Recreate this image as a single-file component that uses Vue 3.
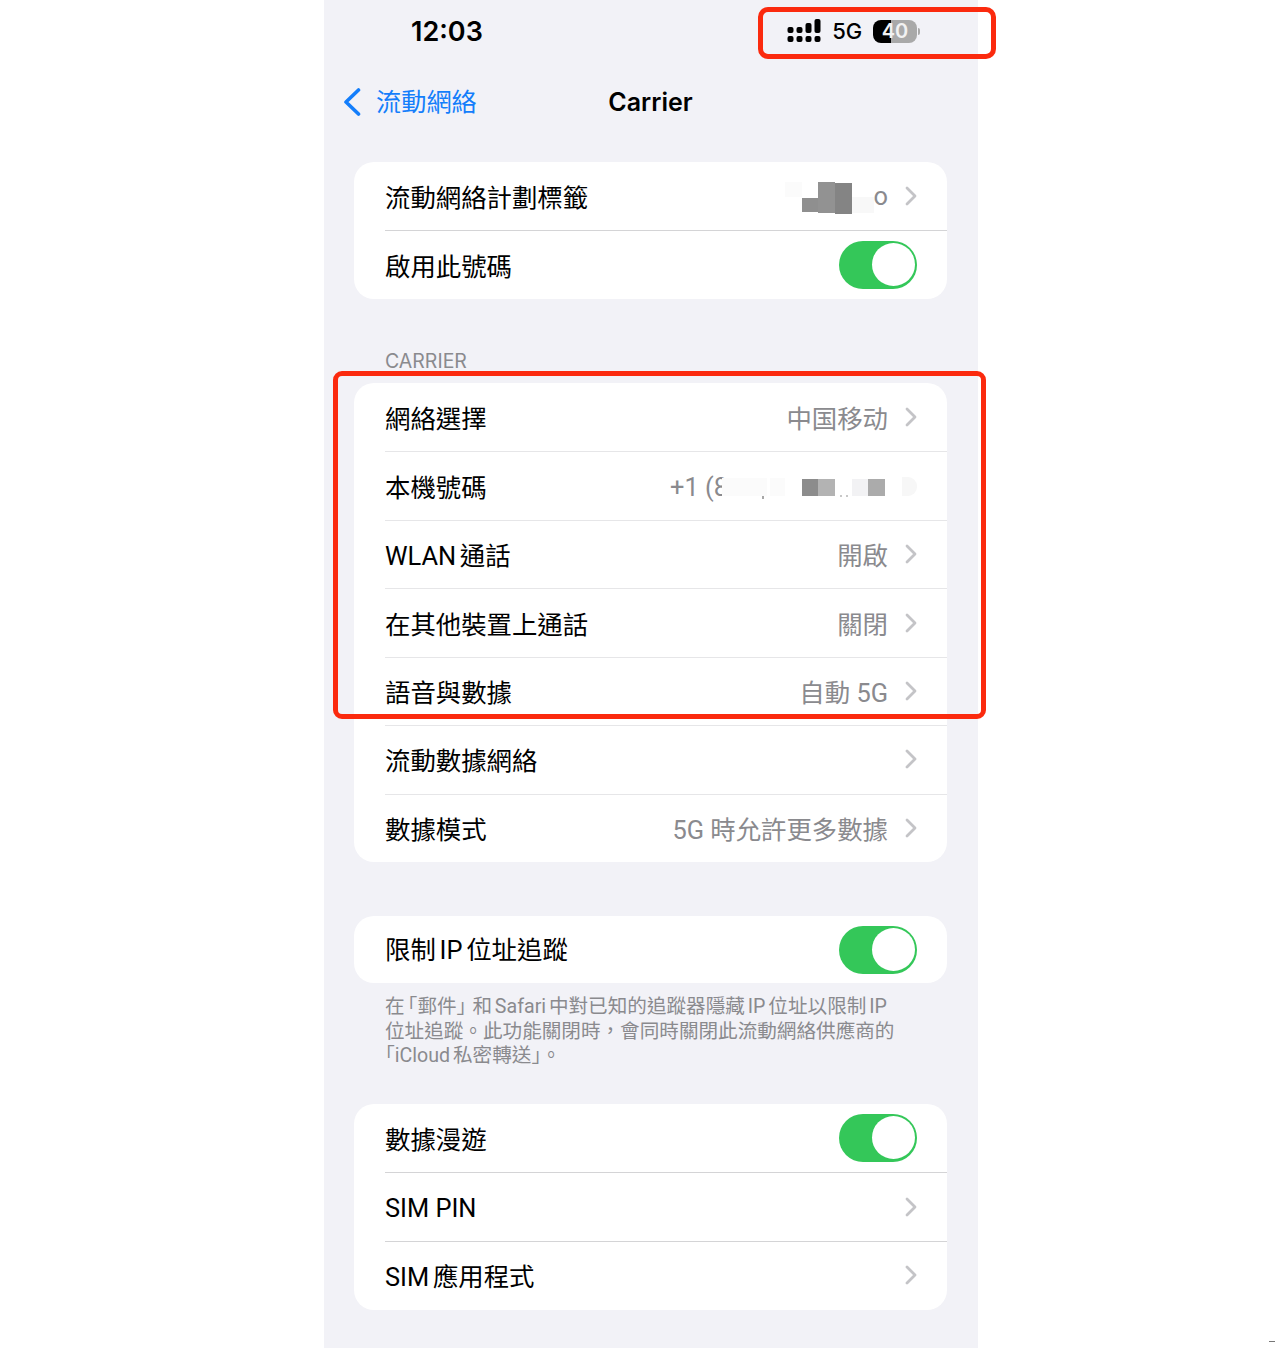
<script setup>
const planRows = [
  { label: '流動網絡計劃標籤', value: 'o', chevron: true, patches: 'plan' },
  { label: '啟用此號碼', toggle: true },
]
const carrierRows = [
  { label: '網絡選擇', value: '中国移动', chevron: true },
  { label: '本機號碼', value: '+1 (8', patches: 'phone' },
  { label: 'WLAN 通話', value: '開啟', chevron: true },
  { label: '在其他裝置上通話', value: '關閉', chevron: true },
  { label: '語音與數據', value: '自動 5G', chevron: true },
  { label: '流動數據網絡', chevron: true },
  { label: '數據模式', value: '5G 時允許更多數據', chevron: true },
]
const limitRows = [{ label: '限制 IP 位址追蹤', toggle: true }]
const simRows = [
  { label: '數據漫遊', toggle: true },
  { label: 'SIM PIN', chevron: true },
  { label: 'SIM 應用程式', chevron: true },
]
const groups = [
  { id: 'plan', rows: planRows },
  { id: 'carrier', title: 'CARRIER', rows: carrierRows },
  { id: 'limit', rows: limitRows, note: true },
  { id: 'sim', rows: simRows },
]
</script>

<template>
  <main class="phone">
    <header class="status">
      <span class="time">12:03</span>
      <div class="indicators">
        <svg class="signal" width="34" height="24" viewBox="0 0 34 24" fill="#000">
          <rect x="0.5" y="17" width="6" height="6" rx="2" />
          <rect x="9.5" y="17" width="6" height="6" rx="2" />
          <rect x="18.5" y="17" width="6" height="6" rx="2" />
          <rect x="27.5" y="17" width="6" height="6" rx="2" />
          <rect x="0.5" y="8" width="6" height="6" rx="2" />
          <rect x="9.5" y="8" width="6" height="6" rx="2" />
          <rect x="18.5" y="4" width="6" height="10" rx="2" />
          <rect x="27.5" y="0" width="6" height="14" rx="2" />
        </svg>
        <span class="net">5G</span>
        <div class="battery"><span>40</span></div>
        <i class="nub"></i>
      </div>
    </header>

    <nav class="nav">
      <a class="back">
        <svg width="18" height="28" viewBox="0 0 18 28" fill="none">
          <path d="M15.5 2 3 14l12.5 12" stroke="#147efb" stroke-width="3.6" stroke-linecap="round" stroke-linejoin="round" />
        </svg>
        <span>流動網絡</span>
      </a>
      <h1>Carrier</h1>
    </nav>

    <section v-for="group in groups" :key="group.id" class="group" :class="'group-' + group.id">
      <h2 v-if="group.title">{{ group.title }}</h2>
      <div class="card">
        <div v-for="row in group.rows" :key="row.label" class="row">
          <span class="label">{{ row.label }}</span>
          <div class="right">
            <span v-if="row.value" class="value" :class="{ 'value-phone': row.patches === 'phone' }">{{ row.value }}</span>
            <svg v-if="row.chevron" class="chevron" width="12" height="20" viewBox="0 0 12 20" fill="none">
              <path d="M2 2l8 8-8 8" stroke="#c4c4c7" stroke-width="2.8" stroke-linecap="round" stroke-linejoin="round" />
            </svg>
            <span v-if="row.toggle" class="toggle"><i></i></span>
          </div>
          <template v-if="row.patches === 'plan'">
            <i class="patch" style="left: 431px; top: 20px; width: 17px; height: 15px; background: #fbfbfb"></i>
            <i class="patch" style="left: 448px; top: 36px; width: 16px; height: 14px; background: #8f8f8f"></i>
            <i class="patch" style="left: 464px; top: 20px; width: 17px; height: 31px; background: #929292"></i>
            <i class="patch" style="left: 481px; top: 21px; width: 17px; height: 31px; background: #848484"></i>
            <i class="patch" style="left: 498px; top: 35px; width: 22px; height: 16px; background: #f8f8f8"></i>
          </template>
          <template v-if="row.patches === 'phone'">
            <i class="patch" style="left: 368px; top: 27px; width: 45px; height: 18px; background: #fbfbfb"></i>
            <i class="patch" style="left: 408px; top: 45px; width: 2px; height: 3px; background: #a8a8a8"></i>
            <i class="patch" style="left: 416px; top: 27px; width: 15px; height: 18px; background: #fbfbfb"></i>
            <i class="patch" style="left: 448px; top: 28px; width: 16px; height: 17px; background: #8c8c8c"></i>
            <i class="patch" style="left: 464px; top: 28px; width: 17px; height: 17px; background: #b3b3b3"></i>
            <i class="patch" style="left: 486px; top: 44px; width: 2px; height: 2px; background: #c8c8c8"></i>
            <i class="patch" style="left: 492px; top: 44px; width: 2px; height: 2px; background: #c8c8c8"></i>
            <i class="patch" style="left: 498px; top: 28px; width: 16px; height: 17px; background: #f2f2f4"></i>
            <i class="patch" style="left: 514px; top: 28px; width: 17px; height: 17px; background: #ababab"></i>
            <i class="patch round" style="left: 548px; top: 26px; width: 15px; height: 19px; background: #f7f7f7"></i>
          </template>
        </div>
      </div>
      <p v-if="group.note" class="note">在<span class="half open">「</span>郵件<span class="half close">」</span>和 Safari 中對已知的追蹤器隱藏 IP 位址以限制 IP<br />位址追蹤。此功能關閉時，會同時關閉此流動網絡供應商的<br /><span class="half">「</span>iCloud 私密轉送<span class="half">」</span>。</p>
    </section>
  </main>

  <!-- 截图上的红色标注框 -->
  <div class="mark mark-status"></div>
  <div class="mark mark-carrier"></div>
  <i class="speck"></i>
</template>

<style>
html,
body {
  background: #fff;
}
</style>

<style scoped>
.phone {
  box-sizing: border-box;
  width: 654px;
  height: 1348px;
  margin-left: 324px;
  padding: 0 31px 0 30px;
  overflow: hidden;
  background: #f2f2f7;
  color: #000;
  font-family: Inter, "Noto Sans CJK TC", sans-serif;
}
.status {
  display: flex;
  align-items: center;
  justify-content: space-between;
  height: 62px;
  padding-left: 57px;
}
.time {
  font-size: 27px;
  font-weight: 600;
}
.indicators {
  display: flex;
  align-items: center;
  margin-right: 27px;
}
.signal {
  display: block;
}
.net {
  margin-left: 11px;
  font-size: 22px;
  font-weight: 500;
  letter-spacing: -0.2px;
}
.battery {
  display: flex;
  align-items: center;
  justify-content: center;
  width: 44px;
  height: 23px;
  margin-left: 11px;
  border-radius: 8px;
  background: linear-gradient(90deg, #000 41%, #a9a9a9 41%);
  color: #f2f2f2;
  font-size: 20px;
  font-weight: 600;
}
.nub {
  width: 2px;
  height: 7px;
  margin-left: 1px;
  border-radius: 0 2px 2px 0;
  background: #a9a9a9;
}
.nav {
  position: relative;
  display: flex;
  align-items: center;
  justify-content: center;
  height: 80px;
}
.back {
  position: absolute;
  left: -11px;
  display: flex;
  align-items: center;
  gap: 15px;
  color: #147efb;
  font-size: 25.2px;
}
.back span {
  padding-bottom: 4px;
}
.nav h1 {
  margin: 0;
  font-size: 25px;
  font-weight: 600;
}
.group-plan {
  margin-top: 20px;
}
.group-carrier {
  margin-top: 49.1px;
}
.group-carrier h2 {
  height: 35px;
  margin: 0;
  padding-left: 31px;
  color: #8a8a8e;
  font-size: 19.5px;
  font-weight: 400;
  line-height: 27px;
}
.group-limit {
  margin-top: 54px;
}
.card {
  border-radius: 20px;
  background: #fff;
  overflow: hidden;
}
.row {
  position: relative;
  display: flex;
  align-items: center;
  justify-content: space-between;
  box-sizing: border-box;
  height: 68.45px;
  padding: 0 30px 0 31px;
  font-family: Roboto, "Noto Sans CJK TC", sans-serif;
}
.group-limit .row {
  height: 67px;
}
.group-limit .label {
  margin-bottom: 3px;
}
.group-sim .row {
  height: 68.7px;
}
.group-sim .row:nth-child(2) .label {
  margin-top: 3px;
  word-spacing: 0;
}
.row + .row::before {
  content: "";
  position: absolute;
  top: 0;
  left: 31px;
  right: 0;
  height: 1px;
  background: #d4d4d6;
}
.group-carrier .row + .row::before {
  background: #e6e6e8;
}
.label {
  font-size: 25.4px;
  word-spacing: -0.1em;
}
.right {
  display: flex;
  align-items: center;
}
.value {
  color: #8a8a8e;
  font-size: 25.4px;
}
.value-phone {
  margin-top: 3px;
  margin-right: 189px;
}
.chevron {
  display: block;
  margin: 0 0.5px 0 16.5px;
}
.toggle {
  display: flex;
  align-items: center;
  justify-content: flex-end;
  box-sizing: border-box;
  width: 78px;
  height: 48px;
  padding-right: 2px;
  border-radius: 24px;
  background: #34c759;
}
.toggle i {
  width: 43px;
  height: 43px;
  border-radius: 50%;
  background: #fff;
}
.patch {
  position: absolute;
}
.patch.round {
  border-radius: 0 9px 9px 0;
}
.note {
  margin: 12px 0 35px;
  padding-left: 31px;
  color: #8a8a8e;
  font-family: Roboto, "Noto Sans CJK TC", sans-serif;
  font-size: 19.6px;
  line-height: 24.5px;
  white-space: nowrap;
  word-spacing: -0.1em;
}
.half {
  font-feature-settings: "halt";
}
.half.open {
  padding-left: 3px;
}
.half.close {
  padding-right: 6px;
}
.mark {
  position: absolute;
  box-sizing: border-box;
  border: 5px solid #fb2a0e;
}
.mark-status {
  top: 7px;
  left: 758px;
  width: 238px;
  height: 52px;
  border-radius: 10px;
}
.mark-carrier {
  top: 371px;
  left: 333px;
  width: 653px;
  height: 348px;
  border-radius: 9px;
}
.speck {
  position: absolute;
  top: 1341px;
  left: 1269px;
  width: 6px;
  height: 1px;
  background: #777;
}
</style>
